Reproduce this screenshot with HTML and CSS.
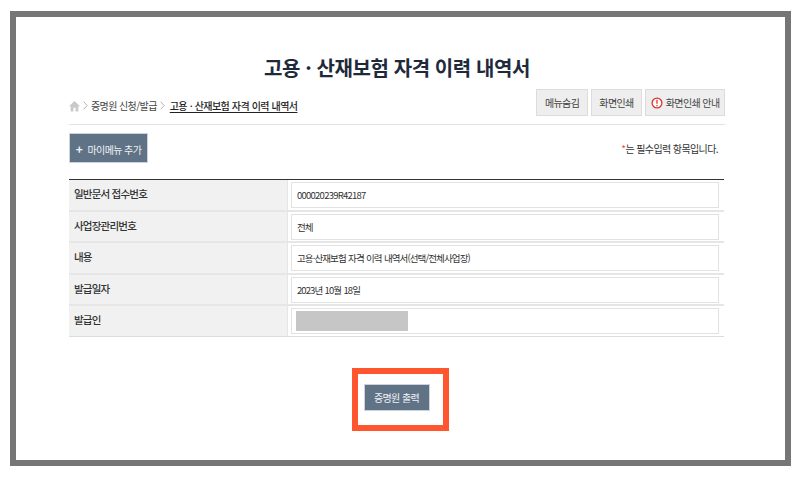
FILE: index.html
```html
<!DOCTYPE html>
<html lang="ko">
<head>
<meta charset="utf-8">
<title>고용·산재보험 자격 이력 내역서</title>
<link rel="stylesheet" href="styles.css">
</head>
<body>
<main class="frame">
  <h1 class="title">고용 · 산재보험 자격 이력 내역서</h1>
  <div class="crumbbar">
    <nav class="crumbs">
      <svg class="home" viewBox="0 0 12 12" width="11" height="12"><path d="M6 .5 0 6.2h1.8V12h3V8h2.4v4h3V6.2H12z" fill="#c9c9c9"/></svg>
      <svg class="sep" viewBox="0 0 5 9" width="5" height="9"><path d="M.7.7 4.2 4.5.7 8.3" fill="none" stroke="#aaa" stroke-width=".9"/></svg>
      <span>증명원 신청/발급</span>
      <svg class="sep" viewBox="0 0 5 9" width="5" height="9"><path d="M.7.7 4.2 4.5.7 8.3" fill="none" stroke="#aaa" stroke-width=".9"/></svg>
      <a class="current">고용 · 산재보험 자격 이력 내역서</a>
    </nav>
    <div class="tools">
      <button class="tool">메뉴숨김</button>
      <button class="tool">화면인쇄</button>
      <button class="tool tool-info">
        <svg viewBox="0 0 12 12" width="12" height="12"><circle cx="6" cy="6" r="4.9" fill="#fff" stroke="#e0312a" stroke-width="1.3"/><path d="M6 2.8v3.9M6 8v1.2" stroke="#e0312a" stroke-width="1.3" fill="none"/></svg>
        화면인쇄 안내
      </button>
    </div>
  </div>
  <div class="actionbar">
    <button class="add"><b class="plus">+</b> 마이메뉴 추가</button>
    <p class="req"><span class="star">*</span>는 필수입력 항목입니다.</p>
  </div>
  <table class="form">
    <tr><th>일반문서 접수번호</th><td><div class="field num">000020239R42187</div></td></tr>
    <tr><th>사업장관리번호</th><td><div class="field">전체</div></td></tr>
    <tr><th>내용</th><td><div class="field">고용·산재보험 자격 이력 내역서(선택/전체사업장)</div></td></tr>
    <tr><th>발급일자</th><td><div class="field">2023년 10월 18일</div></td></tr>
    <tr><th>발급인</th><td><div class="field masked"><span class="mask"></span></div></td></tr>
  </table>
  <div class="submit">
    <div class="highlight"><button class="print">증명원 출력</button></div>
  </div>
</main>
</body>
</html>
```
FILE: styles.css
```css
* { box-sizing: border-box; }
html, body { margin: 0; padding: 0; background: #fff; }
body {
  width: 804px;
  height: 479px;
  overflow: hidden;
  padding: 11px 13px 13px 10px;
  font-family: "Noto Sans CJK KR", "Noto Sans", sans-serif;
  font-size: 10px;
  letter-spacing: -0.6px;
  color: #444;
}
.frame {
  height: 455px;
  border: 6px solid #767676;
  padding: 0 60px 0 53px;
  background: #fff;
}
.title {
  margin: 0;
  padding-top: 35px;
  height: 71px;
  line-height: 32px;
  text-align: center;
  font-size: 20px;
  font-weight: 700;
  letter-spacing: -0.4px;
  color: #1e2a3c;
}
.crumbbar {
  display: flex;
  justify-content: space-between;
  align-items: flex-start;
  height: 37px;
  padding-top: 1px;
  border-bottom: 1px solid #e3e3e3;
}
.crumbs { display: flex; align-items: center; gap: 3px; height: 26px; padding-top: 7px; }
.home { flex: none; }
.sep { flex: none; }
.current { margin-left: 2px; color: #222; font-weight: 500; letter-spacing: -0.6px; word-spacing: 0.5px; text-decoration: underline; text-underline-offset: 2px; }
.tools { display: flex; gap: 3px; }
.tool {
  height: 27px;
  padding: 0 7.5px;
  display: flex;
  align-items: center;
  gap: 3px;
  border: 1px solid #dcdcdc;
  background: #eeeeee;
  font: inherit;
  letter-spacing: inherit;
  color: #444;
}
.tool-info { padding: 0 4.5px; }
.actionbar {
  display: flex;
  justify-content: space-between;
  align-items: flex-start;
  height: 54px;
  padding: 8px 7px 0 0;
}
.add, .print {
  border: 1px solid #cdd3da;
  background: #5f7286;
  color: #f0f2f5;
  font: inherit;
  letter-spacing: inherit;
}
.add { width: 79px; height: 30px; padding: 0; }
.plus { font-weight: 700; font-size: 12px; margin-right: 3px; }
.req { margin: 0; padding-top: 8px; color: #333; }
.star { color: #e8503a; }
.form {
  width: 655px;
  border-collapse: separate;
  border-spacing: 0;
  border-top: 1px solid #333;
  border-bottom: 1px solid #dcdcdc;
}
.form tr + tr > * { border-top: 2px solid #e6e6e6; }
.form th {
  width: 219px;
  padding: 0 0 2px 5px;
  text-align: left;
  background: #f1f1f1;
  border-right: 1px solid #e6e6e6;
  font-weight: 500;
  font-size: 10.5px;
  letter-spacing: -0.8px;
  color: #333;
}
.form td { padding: 2px 5px 1.5px 3px; }
.field {
  display: flex;
  align-items: center;
  height: 26px;
  padding-left: 5px;
  border: 1px solid #e2e2e2;
  background: #fff;
  letter-spacing: -0.9px;
  word-spacing: 0.5px;
  font-size: 9.5px;
  color: #333;
}
.num { letter-spacing: -0.75px; }
.masked { padding: 2px 4px; }
.mask { display: block; width: 112px; height: 100%; background: #c6c6c6; }
.submit { padding: 31px 0 0 283px; }
.highlight {
  width: 97px;
  height: 63px;
  border: 6px solid #ff5630;
  padding: 10px 0 0 6px;
}
.print { display: block; width: 66px; height: 27px; padding: 0 1px 0 0; }
```
